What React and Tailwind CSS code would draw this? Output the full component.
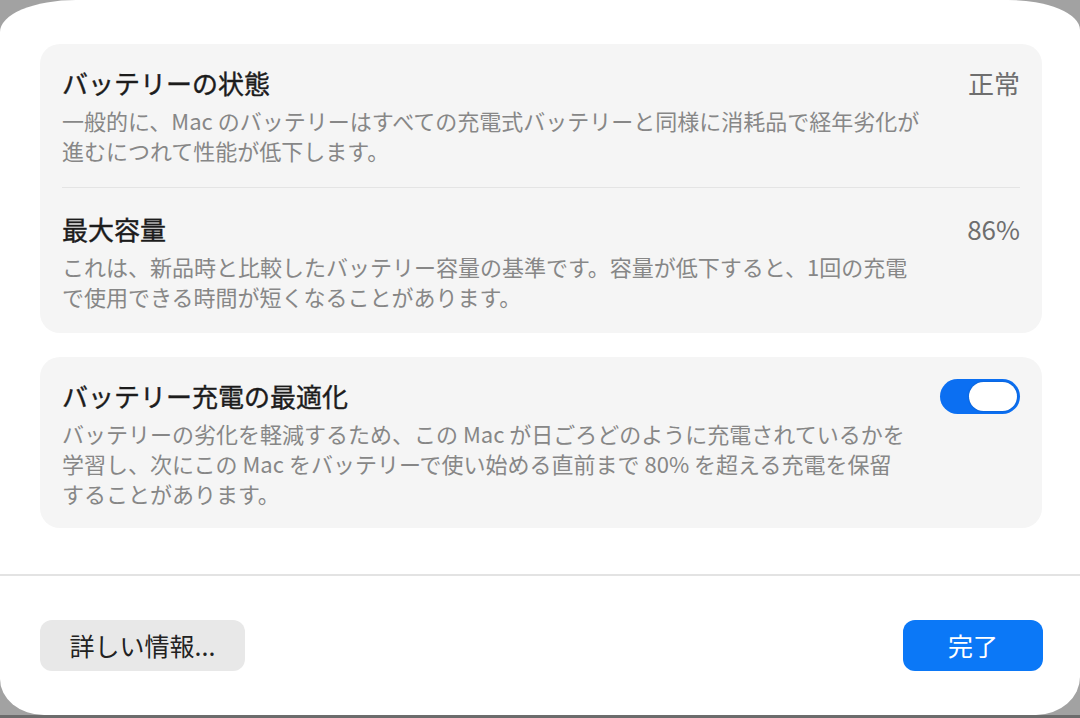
const FONT = { fontFamily: '"Noto Sans CJK JP", "Noto Sans", sans-serif' };

function Toggle() {
  return (
    <div className="flex h-[35px] w-[80px] shrink-0 items-center justify-end rounded-full bg-[#0b6ff2] p-[3px]">
      <div className="h-[29px] w-[48px] rounded-full bg-white shadow-[0_0_2px_rgba(0,0,0,0.25)]" />
    </div>
  );
}

function Row({ title, value, right, children, className = "" }) {
  return (
    <div className={`flex items-start justify-between ${className}`}>
      <div className="flex flex-col gap-[5px]">
        <div className="text-[26px] leading-[34px] text-[#1c1c1c] [-webkit-text-stroke:0.4px_#1c1c1c]">{title}</div>
        <div className="whitespace-nowrap text-[22px] leading-[30px] text-[#878787]">{children}</div>
      </div>
      {value && <div className="text-[26px] leading-[34px] text-[#6e6e6e]">{value}</div>}
      {right && <div>{right}</div>}
    </div>
  );
}

export default function App() {
  return (
    <div style={FONT} className="flex h-[718px] w-[1080px] flex-col overflow-hidden bg-[#a2a2a2]">
      <div className="flex h-[715px] flex-col bg-white rounded-tl-[76px_32px] rounded-tr-[72px_30px] rounded-bl-[44px_36px] rounded-br-[44px_38px]">
        <div className="flex flex-col gap-[24px] pl-[40px] pr-[38px] pt-[44px]">
          {/* battery health */}
          <div className="rounded-[20px] bg-[#f5f5f5] px-[22px]">
            <Row title="バッテリーの状態" value="正常" className="pt-[22px] pb-[22px]">
              一般的に、Mac のバッテリーはすべての充電式バッテリーと同様に消耗品で経年劣化が
              <br />
              進むにつれて性能が低下します。
            </Row>
            <div className="h-px bg-[#e4e4e4]" />
            <Row title="最大容量" value="86%" className="pt-[24px] pb-[22px]">
              これは、新品時と比較したバッテリー容量の基準です。容量が低下すると、1回の充電
              <br />
              で使用できる時間が短くなることがあります。
            </Row>
          </div>

          {/* optimized charging */}
          <div className="rounded-[20px] bg-[#f5f5f5] px-[22px] pt-[22px] pb-[20px]">
            <Row title="バッテリー充電の最適化" right={<Toggle />}>
              バッテリーの劣化を軽減するため、この Mac が日ごろどのように充電されているかを
              <br />
              学習し、次にこの Mac をバッテリーで使い始める直前まで 80% を超える充電を保留
              <br />
              することがあります。
            </Row>
          </div>
        </div>

        <div className="mt-[46px] h-[2px] bg-[#e3e3e3]" />

        <div className="flex items-center justify-between pl-[40px] pr-[37px] pt-[44px]">
          <button className="flex h-[51px] w-[205px] items-center justify-center rounded-[12px] bg-[#e8e8e8] text-[25px] text-[#222222]">
            詳しい情報...
          </button>
          <button className="flex h-[51px] w-[140px] items-center justify-center rounded-[12px] bg-[#0b78f7] text-[25px] text-white">
            完了
          </button>
        </div>
      </div>
      <div className="h-[3px] bg-[#6c6c6c]" />
    </div>
  );
}
